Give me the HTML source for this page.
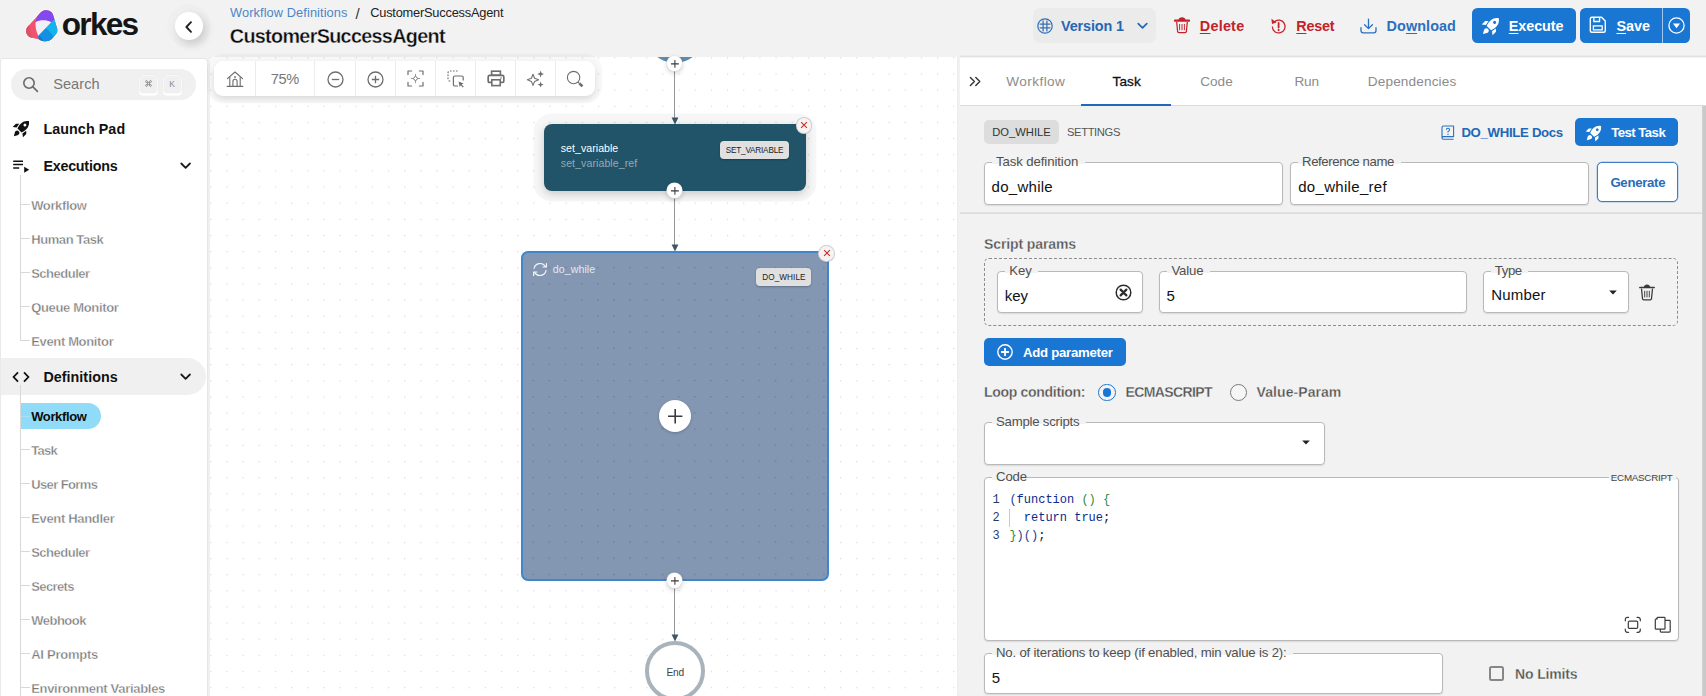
<!DOCTYPE html>
<html><head><meta charset="utf-8"><title>Orkes</title>
<style>
*{box-sizing:border-box;margin:0;padding:0}
html,body{width:1706px;height:696px;overflow:hidden;background:#f2f2f2;font-family:"Liberation Sans",sans-serif;}
body{position:relative}
.t{position:absolute;white-space:pre;line-height:1;display:block}
.a{position:absolute}
svg{position:absolute;overflow:visible}
u{text-decoration:underline;text-underline-offset:2.3px;text-decoration-thickness:1.35px}

</style></head>
<body>
<div class="a" style="left:959.5px;top:54.6px;width:746.5px;height:2.6px;background:linear-gradient(#f2f2f2,#e6e6e6 45%,#dedede)"></div><svg style="left:26px;top:10px;" width="32" height="32" viewBox="0 0 32 32">
<defs><clipPath id="lg"><path d="M14.6 2.4 C16.6 0.4 18.6 0 20.6 0.2 C24.6 0.4 27.2 3 27.9 7.4 L31.2 18.4 C31.9 21 31.1 23 29.5 24.8 L26.6 28.3 C24.6 30.5 22 31.5 19.3 31.3 C17 31.2 15 30.4 13.4 29.4 L4.6 27.4 C1.8 26.6 0 24 0 20.8 C0 19.5 0.4 18.3 1.1 17.3 Z"/></clipPath></defs>
<path d="M14.6 2.4 C16.6 0.4 18.6 0 20.6 0.2 C24.6 0.4 27.2 3 27.9 7.4 L31.2 18.4 C31.9 21 31.1 23 29.5 24.8 L26.6 28.3 C24.6 30.5 22 31.5 19.3 31.3 C17 31.2 15 30.4 13.4 29.4 L4.6 27.4 C1.8 26.6 0 24 0 20.8 C0 19.5 0.4 18.3 1.1 17.3 Z" fill="none" stroke="#fff" stroke-opacity=".75" stroke-width="1.6"/>
<g clip-path="url(#lg)">
<rect x="-1" y="-1" width="34" height="34" fill="#f1536f"/>
<path d="M-1 16 L3 14 L6 28.5 L-1 30 Z" fill="#dc5068"/>
<path d="M11.6 5 L9.6 12.2 L25.2 12.4 L29.6 8.8 L30 -1 L11 -1 Z" fill="#8448f0"/>
<path d="M25 12 L29.6 8.6 L33 9 L33 33 L14 33 L13.4 29.4 L12.2 25.4 Z" fill="#12b4ef"/>
<path d="M19 18.2 L21.8 19.4 L27.4 26 L24 33 L14 33 L13.4 29.4 L12.2 25.4 Z" fill="#1390e2"/>
<path d="M12.2 25.4 L15.4 27.4 L17.6 32 L13 31 Z" fill="#1b74d4"/>
<path d="M9.7 12 C14 9.7 21 9.9 25.2 12.2 L12.3 25.7 C10 21.5 9.1 16 9.7 12 Z" fill="#f3eff8"/>
</g>
</svg><span class="t" style="left:61.80px;top:9.15px;font-size:31.6px;color:#151515;font-weight:700;letter-spacing:-1.743px;">orkes</span><div class="a" style="left:174.5px;top:12.4px;width:28px;height:28px;border-radius:50%;background:#fff;box-shadow:3px 4px 10px rgba(0,0,0,.16),0 0 0 8px rgba(0,0,0,.012)"></div><svg style="left:182.5px;top:19.8px;" width="12" height="14" viewBox="0 0 12 14"><path d="M8 2.2 L3.4 7 L8 11.8" fill="none" stroke="#222" stroke-width="1.9" stroke-linecap="round" stroke-linejoin="round"/></svg><span class="t" style="left:230.00px;top:7.16px;font-size:12.8px;color:#4a87c7;font-weight:400;letter-spacing:0.091px;">Workflow Definitions</span><span class="t" style="left:355.40px;top:5.50px;font-size:15px;color:#333;font-weight:400;">/</span><span class="t" style="left:370.20px;top:7.16px;font-size:12.8px;color:#222;font-weight:400;letter-spacing:-0.204px;">CustomerSuccessAgent</span><span class="t" style="left:229.80px;top:26.64px;font-size:19.8px;color:#0b0b0b;font-weight:700;letter-spacing:-0.683px;-webkit-text-stroke:.35px #f2f2f2;">CustomerSuccessAgent</span><div class="a" style="left:1033px;top:8px;width:122.5px;height:35px;background:#ebebeb;border-radius:7px"></div><svg style="left:1037px;top:17.7px;" width="16" height="16" viewBox="0 0 16 16"><circle cx="8" cy="8" r="7.2" fill="none" stroke="#2a70bf" stroke-width="1.2"/><path d="M6.1 2.6V13.4M9.9 2.6V13.4M2.6 6.1H13.4M2.6 9.9H13.4" stroke="#3a6fae" stroke-width="1.25" fill="none"/></svg><span class="t" style="left:1061.00px;top:18.61px;font-size:14.4px;color:#2368b4;font-weight:700;letter-spacing:-0.111px;">Version 1</span><svg style="left:1136.5px;top:22px;" width="11" height="8" viewBox="0 0 11 8"><path d="M1.2 1.6 L5.5 5.9 L9.8 1.6" fill="none" stroke="#2368b4" stroke-width="1.7" stroke-linecap="round" stroke-linejoin="round"/></svg><svg style="left:1173.6px;top:15.6px;" width="16" height="18" viewBox="0 0 16 18"><path d="M2.7 6 L3.6 15.4 Q3.7 16.6 4.9 16.6 H11.1 Q12.3 16.6 12.4 15.4 L13.3 6" fill="none" stroke="#c4212b" stroke-width="1.25"/><path d="M1 4.7 H15" stroke="#c4212b" stroke-width="2.3" stroke-linecap="round"/><path d="M4.4 4.4 C4.4 0.2 11.6 0.2 11.6 4.4 Z" fill="#c4212b"/><path d="M5.6 8V14.2M8 8V14.2M10.4 8V14.2" stroke="#c4212b" stroke-width=".95"/></svg><span class="t" style="left:1199.80px;top:18.61px;font-size:14.4px;color:#c4212b;font-weight:700;letter-spacing:0.230px;"><u>D</u>elete</span><svg style="left:1270.1px;top:17.8px;" width="17" height="17" viewBox="0 0 17 17"><path d="M4.2 4 A6.4 6.4 0 1 1 2.3 8.6" fill="none" stroke="#c4212b" stroke-width="1.25"/><path d="M1.4 0.8 L2 6 L6.6 4.6 Z" fill="#c4212b"/><path d="M8.6 5V9.6" stroke="#c4212b" stroke-width="1.8" stroke-linecap="round"/><circle cx="8.6" cy="12.1" r="1.05" fill="#c4212b"/></svg><span class="t" style="left:1296.30px;top:18.61px;font-size:14.4px;color:#c4212b;font-weight:700;letter-spacing:-0.244px;"><u>R</u>eset</span><svg style="left:1360px;top:17.5px;" width="17" height="16" viewBox="0 0 17 16"><path d="M8.5 1.2 V10.4 M4.6 6.8 L8.5 10.6 L12.4 6.8" fill="none" stroke="#2a70bf" stroke-width="1.3" stroke-linecap="round" stroke-linejoin="round"/><path d="M1 9.6 V12.6 Q1 14.8 3.2 14.8 H13.8 Q16 14.8 16 12.6 V9.6" fill="none" stroke="#2a70bf" stroke-width="1.3" stroke-linecap="round"/></svg><span class="t" style="left:1386.50px;top:18.61px;font-size:14.4px;color:#2a70bf;font-weight:700;letter-spacing:0.092px;">Do<u>w</u>nload</span><div class="a" style="left:1472px;top:7.6px;width:104px;height:35.8px;background:#1976d2;border-radius:5.5px"></div><svg style="left:1480.9px;top:15.7px;" width="20" height="20" viewBox="0 0 18 18"><g transform="translate(9 9) rotate(45) scale(.885) translate(-10 -11.4)"><path d="M10 0.2 C14.7 3.4 15.2 9.2 13.1 14.4 L6.9 14.4 C4.8 9.2 5.3 3.4 10 0.2 Z" fill="#fff"/><circle cx="10" cy="6.2" r="1.55" fill="#1976d2"/><path d="M4.7 9.6 L2.2 12 L2.2 17 L5.6 14.4 Z M15.3 9.6 L17.8 12 L17.8 17 L14.4 14.4 Z" fill="#fff"/><path d="M10 15.6 C12.2 15.6 12.9 17.6 12.1 19.4 L10 23 L7.9 19.4 C7.1 17.6 7.8 15.6 10 15.6 Z" fill="#fff"/></g></svg><span class="t" style="left:1508.80px;top:18.61px;font-size:14.4px;color:#fff;font-weight:700;letter-spacing:-0.088px;"><u>E</u>xecute</span><div class="a" style="left:1580px;top:7.6px;width:110px;height:35.8px;background:#1976d2;border-radius:5.5px"></div><div class="a" style="left:1662px;top:7.6px;width:1px;height:35.8px;background:rgba(255,255,255,.6)"></div><svg style="left:1589.2px;top:16.4px;" width="17.6" height="17.6" viewBox="0 0 16 16"><path d="M1.2 2.6 Q1.2 1.2 2.6 1.2 H11.4 L14.8 4.6 V13.4 Q14.8 14.8 13.4 14.8 H2.6 Q1.2 14.8 1.2 13.4 Z" fill="none" stroke="#fff" stroke-width="1.3" stroke-linejoin="round"/><path d="M4.4 1.4 V5 H9.6 V1.4" fill="none" stroke="#fff" stroke-width="1.2"/><rect x="4" y="9" width="8" height="3.6" fill="none" stroke="#fff" stroke-width="1.2"/></svg><span class="t" style="left:1616.50px;top:18.61px;font-size:14.4px;color:#fff;font-weight:700;letter-spacing:-0.056px;"><u>S</u>ave</span><svg style="left:1667.7px;top:17.2px;" width="17" height="17" viewBox="0 0 17 17"><circle cx="8.5" cy="8.5" r="7.6" fill="none" stroke="#fff" stroke-width="1.3"/><path d="M4.9 6.6 H12.1 L8.5 11.2 Z" fill="#fff"/></svg><div class="a" style="left:0px;top:57.6px;width:207.5px;height:640px;background:#fff;border:1.5px solid #e6e6e6;border-left:1px solid #e9e9e9;border-bottom:0;border-top-right-radius:4px;border-top-left-radius:3px;border-top-width:1.2px"></div><div class="a" style="left:11px;top:69px;width:185px;height:31px;background:#f0f0f0;border-radius:16px"></div><svg style="left:22px;top:75.5px;" width="18" height="18" viewBox="0 0 18 18"><circle cx="7" cy="7" r="5.2" fill="none" stroke="#6b6b6b" stroke-width="1.6"/><path d="M10.9 10.9 L15.4 15.4" stroke="#6b6b6b" stroke-width="1.7" stroke-linecap="round"/></svg><span class="t" style="left:53.20px;top:77.24px;font-size:14.6px;color:#777;font-weight:400;letter-spacing:0.042px;">Search</span><div class="a" style="left:138.5px;top:74.6px;width:19px;height:19px;background:#f0f0f0;border-radius:4px;border:1px solid #f8f8f8;box-shadow:0 1.6px 0 #fff,0 0 0 .5px #e9e9e9"></div><div class="a" style="left:162.5px;top:74.6px;width:19px;height:19px;background:#f0f0f0;border-radius:4px;border:1px solid #f8f8f8;box-shadow:0 1.6px 0 #fff,0 0 0 .5px #e9e9e9"></div><svg style="left:144.5px;top:80.2px;" width="7" height="7" viewBox="0 0 7 7"><path d="M2.4 2.4 H4.6 V4.6 H2.4 Z M2.4 2.4 H1.4 A.9 .9 0 1 1 2.4 1.4 Z M4.6 2.4 V1.4 A.9 .9 0 1 1 5.6 2.4 Z M4.6 4.6 H5.6 A.9 .9 0 1 1 4.6 5.6 Z M2.4 4.6 V5.6 A.9 .9 0 1 1 1.4 4.6 Z" fill="none" stroke="#888" stroke-width=".9"/></svg><span class="t" style="left:169.20px;top:80.12px;font-size:8.6px;color:#888;font-weight:400;">K</span><svg style="left:12px;top:118.6px;" width="19" height="19" viewBox="0 0 18 18"><g transform="translate(9 9) rotate(45) scale(.885) translate(-10 -11.4)"><path d="M10 0.2 C14.7 3.4 15.2 9.2 13.1 14.4 L6.9 14.4 C4.8 9.2 5.3 3.4 10 0.2 Z" fill="#111"/><circle cx="10" cy="6.2" r="1.55" fill="#fff"/><path d="M4.7 9.6 L2.2 12 L2.2 17 L5.6 14.4 Z M15.3 9.6 L17.8 12 L17.8 17 L14.4 14.4 Z" fill="#111"/><path d="M10 15.6 C12.2 15.6 12.9 17.6 12.1 19.4 L10 23 L7.9 19.4 C7.1 17.6 7.8 15.6 10 15.6 Z" fill="#111"/></g></svg><span class="t" style="left:43.40px;top:121.90px;font-size:14.3px;color:#111;font-weight:700;letter-spacing:0.077px;">Launch Pad</span><svg style="left:12px;top:159px;" width="19" height="15" viewBox="0 0 19 15"><path d="M1.2 2.3 H11 M1.2 5.6 H11 M1.2 8.9 H7.2" stroke="#111" stroke-width="1.5" fill="none"/><path d="M12.2 7.8 L17.2 10.7 L12.2 13.7 Z" fill="#111"/></svg><span class="t" style="left:43.40px;top:158.90px;font-size:14.3px;color:#111;font-weight:700;letter-spacing:-0.228px;">Executions</span><svg style="left:180.4px;top:162px;" width="11" height="8" viewBox="0 0 11 8"><path d="M1.3 1.5 L5.6 5.8 L9.9 1.5" fill="none" stroke="#1a1a1a" stroke-width="1.8" stroke-linecap="round" stroke-linejoin="round"/></svg><div class="a" style="left:20px;top:174.5px;width:1px;height:166.5px;background:#d8d8d8"></div><div class="a" style="left:20px;top:204.2px;width:9.8px;height:1px;background:#d8d8d8"></div><span class="t" style="left:31.20px;top:198.60px;font-size:13px;color:#7a7a7a;font-weight:700;letter-spacing:-0.371px;-webkit-text-stroke:.35px #fff;">Workflow</span><div class="a" style="left:20px;top:238.2px;width:9.8px;height:1px;background:#d8d8d8"></div><span class="t" style="left:31.20px;top:232.60px;font-size:13px;color:#7a7a7a;font-weight:700;letter-spacing:-0.414px;-webkit-text-stroke:.35px #fff;">Human Task</span><div class="a" style="left:20px;top:272.2px;width:9.8px;height:1px;background:#d8d8d8"></div><span class="t" style="left:31.20px;top:266.60px;font-size:13px;color:#7a7a7a;font-weight:700;letter-spacing:-0.495px;-webkit-text-stroke:.35px #fff;">Scheduler</span><div class="a" style="left:20px;top:306.2px;width:9.8px;height:1px;background:#d8d8d8"></div><span class="t" style="left:31.20px;top:300.60px;font-size:13px;color:#7a7a7a;font-weight:700;letter-spacing:-0.340px;-webkit-text-stroke:.35px #fff;">Queue Monitor</span><div class="a" style="left:20px;top:340.2px;width:9.8px;height:1px;background:#d8d8d8"></div><span class="t" style="left:31.20px;top:334.60px;font-size:13px;color:#7a7a7a;font-weight:700;letter-spacing:-0.344px;-webkit-text-stroke:.35px #fff;">Event Monitor</span><div class="a" style="left:1px;top:357.8px;width:204.5px;height:37px;background:#f0f0f0;border-radius:0 18.5px 18.5px 0"></div><svg style="left:12.2px;top:370.5px;" width="18" height="12" viewBox="0 0 18 12"><path d="M6 1.4 L1.6 6 L6 10.6 M12 1.4 L16.4 6 L12 10.6" fill="none" stroke="#111" stroke-width="1.8" stroke-linejoin="miter"/></svg><span class="t" style="left:43.40px;top:369.90px;font-size:14.3px;color:#111;font-weight:700;letter-spacing:0.039px;">Definitions</span><svg style="left:180.4px;top:373px;" width="11" height="8" viewBox="0 0 11 8"><path d="M1.3 1.5 L5.6 5.8 L9.9 1.5" fill="none" stroke="#1a1a1a" stroke-width="1.8" stroke-linecap="round" stroke-linejoin="round"/></svg><div class="a" style="left:20px;top:385px;width:1px;height:320px;background:#d8d8d8"></div><div class="a" style="left:20.5px;top:403px;width:80px;height:25.6px;background:#90dcf8;border-radius:0 13px 13px 0"></div><div class="a" style="left:21px;top:416px;width:8.5px;height:1px;background:#a9e0f5"></div><span class="t" style="left:31.20px;top:409.60px;font-size:13px;color:#0c0c0c;font-weight:700;letter-spacing:-0.371px;">Workflow</span><div class="a" style="left:20px;top:449.2px;width:9.8px;height:1px;background:#d8d8d8"></div><span class="t" style="left:31.20px;top:443.60px;font-size:13px;color:#7a7a7a;font-weight:700;letter-spacing:-0.718px;-webkit-text-stroke:.35px #fff;">Task</span><div class="a" style="left:20px;top:483.2px;width:9.8px;height:1px;background:#d8d8d8"></div><span class="t" style="left:31.20px;top:477.60px;font-size:13px;color:#7a7a7a;font-weight:700;letter-spacing:-0.605px;-webkit-text-stroke:.35px #fff;">User Forms</span><div class="a" style="left:20px;top:517.2px;width:9.8px;height:1px;background:#d8d8d8"></div><span class="t" style="left:31.20px;top:511.60px;font-size:13px;color:#7a7a7a;font-weight:700;letter-spacing:-0.325px;-webkit-text-stroke:.35px #fff;">Event Handler</span><div class="a" style="left:20px;top:551.2px;width:9.8px;height:1px;background:#d8d8d8"></div><span class="t" style="left:31.20px;top:545.60px;font-size:13px;color:#7a7a7a;font-weight:700;letter-spacing:-0.495px;-webkit-text-stroke:.35px #fff;">Scheduler</span><div class="a" style="left:20px;top:585.2px;width:9.8px;height:1px;background:#d8d8d8"></div><span class="t" style="left:31.20px;top:579.60px;font-size:13px;color:#7a7a7a;font-weight:700;letter-spacing:-0.598px;-webkit-text-stroke:.35px #fff;">Secrets</span><div class="a" style="left:20px;top:619.2px;width:9.8px;height:1px;background:#d8d8d8"></div><span class="t" style="left:31.20px;top:613.60px;font-size:13px;color:#7a7a7a;font-weight:700;letter-spacing:-0.495px;-webkit-text-stroke:.35px #fff;">Webhook</span><div class="a" style="left:20px;top:653.2px;width:9.8px;height:1px;background:#d8d8d8"></div><span class="t" style="left:31.20px;top:647.60px;font-size:13px;color:#7a7a7a;font-weight:700;letter-spacing:-0.254px;-webkit-text-stroke:.35px #fff;">AI Prompts</span><div class="a" style="left:20px;top:687.2px;width:9.8px;height:1px;background:#d8d8d8"></div><span class="t" style="left:31.20px;top:681.60px;font-size:13px;color:#7a7a7a;font-weight:700;letter-spacing:-0.303px;-webkit-text-stroke:.35px #fff;">Environment Variables</span><div class="a" style="left:209.6px;top:56.8px;width:747.6px;height:639.2px;background:#fff;overflow:hidden"><svg style="left:0;top:0" width="747.6" height="639.2"><defs><pattern id="dots" x="0.25" y="0.25" width="16.15" height="16.15" patternUnits="userSpaceOnUse"><rect x="0" y="0" width="1.2" height="1.2" fill="#d8d8d8"/></pattern></defs><rect width="100%" height="100%" fill="url(#dots)"/></svg></div><div class="a" style="left:207.5px;top:57.2px;width:2.1px;height:640px;background:#f0f0f0"></div><div class="a" style="left:957.2px;top:57.2px;width:2.8px;height:640px;background:linear-gradient(90deg,#ececec,#f3f3f3)"></div><div class="a" style="left:640px;top:56.8px;width:70px;height:9px;overflow:hidden"><div class="a" style="left:5.5px;top:-52.099999999999994px;width:58px;height:58px;border-radius:50%;background:#5f89ad"></div></div><div class="a" style="left:673.8px;top:63px;width:1.4px;height:56px;background:#979797"></div><svg style="left:670.5px;top:116.5px;" width="8" height="8" viewBox="0 0 8 8"><path d="M0.6 0.4 H7.4 L4 7.6 Z" fill="#3f566a"/></svg><div class="a" style="left:673.8px;top:191px;width:1.4px;height:55.5px;background:#979797"></div><svg style="left:670.5px;top:244.0px;" width="8" height="8" viewBox="0 0 8 8"><path d="M0.6 0.4 H7.4 L4 7.6 Z" fill="#3f566a"/></svg><div class="a" style="left:673.8px;top:581px;width:1.4px;height:55.5px;background:#979797"></div><svg style="left:670.5px;top:634.0px;" width="8" height="8" viewBox="0 0 8 8"><path d="M0.6 0.4 H7.4 L4 7.6 Z" fill="#3f566a"/></svg><div class="a" style="left:543.8px;top:123.8px;width:262.4px;height:67px;background:#215468;border-radius:8px;box-shadow:0 0 0 10.5px rgba(0,0,0,.035),0 3px 8px rgba(0,0,0,.18)"></div><span class="t" style="left:560.80px;top:142.63px;font-size:10.6px;color:#fff;font-weight:400;letter-spacing:0.031px;">set_variable</span><span class="t" style="left:560.80px;top:158.23px;font-size:10.6px;color:#94aab5;font-weight:400;letter-spacing:0.069px;">set_variable_ref</span><div class="a" style="left:719.6px;top:140.8px;width:69.4px;height:17.8px;background:#e0e0e0;border-radius:4px;box-shadow:0 1px 2px rgba(0,0,0,.25)"></div><span class="t" style="left:725.70px;top:146.56px;font-size:8.2px;color:#222;font-weight:400;letter-spacing:-0.193px;">SET_VARIABLE</span><div class="a" style="left:666.85px;top:55.85px;width:15.5px;height:15.5px;background:#fff;border-radius:50%;box-shadow:0 0 0 .6px #e2e2e2,0 2px 5px rgba(0,0,0,.22)"></div><svg style="left:669.7px;top:58.7px;" width="9.8" height="9.8" viewBox="0 0 9.8 9.8"><path d="M4.9 1 V8.8 M1 4.9 H8.8" stroke="#3a3a3a" stroke-width="1.05" fill="none"/></svg><div class="a" style="left:666.75px;top:182.95px;width:15.5px;height:15.5px;background:#fff;border-radius:50%;box-shadow:0 0 0 .6px #e2e2e2,0 2px 5px rgba(0,0,0,.22)"></div><svg style="left:669.6px;top:185.79999999999998px;" width="9.8" height="9.8" viewBox="0 0 9.8 9.8"><path d="M4.9 1 V8.8 M1 4.9 H8.8" stroke="#3a3a3a" stroke-width="1.05" fill="none"/></svg><div class="a" style="left:796.7px;top:118.10000000000001px;width:14.6px;height:14.6px;background:#f7f3f3;border-radius:50%;box-shadow:0 0 0 1px #cfcfcf,0 1px 2px rgba(0,0,0,.2)"></div><svg style="left:800px;top:121.4px;" width="8" height="8" viewBox="0 0 8 8"><path d="M1.1 1.1 L6.9 6.9 M6.9 1.1 L1.1 6.9" stroke="#cc2b2b" stroke-width="1.1" fill="none"/></svg><div class="a" style="left:521.4px;top:251.2px;width:307.2px;height:329.8px;background:rgba(96,121,156,.78);border:2px solid #3f86cc;border-radius:7px"></div><svg style="left:523.4px;top:253.2px" width="303.2" height="325.3"><defs><pattern id="dots2" x="-313.55" y="-196.15" width="16.15" height="16.15" patternUnits="userSpaceOnUse"><rect x="0" y="0" width="1.2" height="1.2" fill="rgba(60,80,110,.38)"/></pattern></defs><rect width="100%" height="100%" fill="url(#dots2)"/></svg><svg style="left:531.8px;top:262.3px;" width="16" height="15" viewBox="0 0 16 15"><path d="M2 6.4 A6.2 6.2 0 0 1 13.4 4.6 M14 8.6 A6.2 6.2 0 0 1 2.6 10.4" fill="none" stroke="#f2f5f8" stroke-width="1.2" stroke-linecap="round"/><path d="M14.4 1.6 V5 H11 M1.6 13.4 V10 H5" fill="none" stroke="#f2f5f8" stroke-width="1.2" stroke-linecap="round" stroke-linejoin="round"/></svg><span class="t" style="left:552.80px;top:264.23px;font-size:10.6px;color:#e4e9ef;font-weight:400;letter-spacing:0.084px;">do_while</span><div class="a" style="left:756.2px;top:268.4px;width:55.2px;height:17.6px;background:#e0e0e0;border-radius:4px;box-shadow:0 1px 2px rgba(0,0,0,.25)"></div><span class="t" style="left:762.20px;top:274.36px;font-size:8.2px;color:#222;font-weight:400;letter-spacing:0.079px;">DO_WHILE</span><div class="a" style="left:819.2px;top:246.0px;width:14.6px;height:14.6px;background:#f7f3f3;border-radius:50%;box-shadow:0 0 0 1px #cfcfcf,0 1px 2px rgba(0,0,0,.2)"></div><svg style="left:822.5px;top:249.3px;" width="8" height="8" viewBox="0 0 8 8"><path d="M1.1 1.1 L6.9 6.9 M6.9 1.1 L1.1 6.9" stroke="#cc2b2b" stroke-width="1.1" fill="none"/></svg><div class="a" style="left:658.8px;top:400.2px;width:32px;height:32px;background:#fff;border-radius:50%;box-shadow:0 1px 3px rgba(0,0,0,.2)"></div><svg style="left:666.5999999999999px;top:408.0px;" width="16.4" height="16.4" viewBox="0 0 16.4 16.4"><path d="M8.2 1 V15.4 M1 8.2 H15.4" stroke="#3a3a3a" stroke-width="1.6" fill="none"/></svg><div class="a" style="left:666.75px;top:572.95px;width:15.5px;height:15.5px;background:#fff;border-radius:50%;box-shadow:0 0 0 .6px #e2e2e2,0 2px 5px rgba(0,0,0,.22)"></div><svg style="left:669.6px;top:575.8000000000001px;" width="9.8" height="9.8" viewBox="0 0 9.8 9.8"><path d="M4.9 1 V8.8 M1 4.9 H8.8" stroke="#3a3a3a" stroke-width="1.05" fill="none"/></svg><div class="a" style="left:645px;top:641px;width:59.5px;height:59.5px;background:#fff;border-radius:50%;border:4px solid #a9b3bb"></div><span class="t" style="left:666.40px;top:667.57px;font-size:10.2px;color:#444;font-weight:400;letter-spacing:-0.180px;">End</span><div class="a" style="left:214.4px;top:61.4px;width:381px;height:34.4px;background:#fff;border-radius:9px;box-shadow:0 0 0 7px rgba(0,0,0,.028),0 3px 6px rgba(0,0,0,.12)"></div><div class="a" style="left:254.9px;top:61.4px;width:1px;height:34.4px;background:#ececec"></div><div class="a" style="left:314.0px;top:61.4px;width:1px;height:34.4px;background:#ececec"></div><div class="a" style="left:355.0px;top:61.4px;width:1px;height:34.4px;background:#ececec"></div><div class="a" style="left:395.1px;top:61.4px;width:1px;height:34.4px;background:#ececec"></div><div class="a" style="left:435.2px;top:61.4px;width:1px;height:34.4px;background:#ececec"></div><div class="a" style="left:475.3px;top:61.4px;width:1px;height:34.4px;background:#ececec"></div><div class="a" style="left:515.2px;top:61.4px;width:1px;height:34.4px;background:#ececec"></div><div class="a" style="left:555.0px;top:61.4px;width:1px;height:34.4px;background:#ececec"></div><svg style="left:225.8px;top:70.0px;" width="18" height="18" viewBox="0 0 18 18"><path d="M1.4 8.6 L9 2 L16.6 8.6" fill="none" stroke="#6e6e6e" stroke-width="1.1" stroke-linejoin="round" stroke-linecap="round"/><path d="M3.8 7.2 V16.2 M14.2 7.2 V16.2 M1.2 16.4 H16.8" fill="none" stroke="#6e6e6e" stroke-width="1.1" stroke-linecap="round"/><path d="M6.9 16.2 V11.4 A2.1 2.1 0 0 1 11.1 11.4 V16.2" fill="none" stroke="#6e6e6e" stroke-width="1.1"/><circle cx="9" cy="7" r=".9" fill="#6e6e6e"/></svg><span class="t" style="left:270.80px;top:71.74px;font-size:14.6px;color:#777;font-weight:400;letter-spacing:-0.406px;">75%</span><svg style="left:326.7px;top:70.6px;" width="17" height="17" viewBox="0 0 17 17"><circle cx="8.5" cy="8.5" r="7.5" fill="none" stroke="#6e6e6e" stroke-width="1.3"/><path d="M4.8 8.5 H12.2" stroke="#6e6e6e" stroke-width="1.3"/></svg><svg style="left:366.9px;top:70.6px;" width="17" height="17" viewBox="0 0 17 17"><circle cx="8.5" cy="8.5" r="7.5" fill="none" stroke="#6e6e6e" stroke-width="1.3"/><path d="M4.8 8.5 H12.2 M8.5 4.8 V12.2" stroke="#6e6e6e" stroke-width="1.3"/></svg><svg style="left:407px;top:70.3px;" width="17" height="17" viewBox="0 0 17 17"><path d="M1 4.6 V1 H4.6 M12.4 1 H16 V4.6 M16 12.4 V16 H12.4 M4.6 16 H1 V12.4" fill="none" stroke="#6e6e6e" stroke-width="1.2" stroke-linecap="round" stroke-linejoin="round"/><path d="M8.5 5.8 L9.5 7.5 L11.2 8.5 L9.5 9.5 L8.5 11.2 L7.5 9.5 L5.8 8.5 L7.5 7.5 Z" fill="none" stroke="#6e6e6e" stroke-width=".9" stroke-linejoin="round"/><path d="M8.5 3.8 V5.8 M8.5 11.2 V13.2 M3.8 8.5 H5.8 M11.2 8.5 H13.2" stroke="#6e6e6e" stroke-width=".9" opacity=".75"/></svg><svg style="left:446.6px;top:70.0px;" width="18" height="18" viewBox="0 0 18 18"><path d="M10.6 1 H3 Q1 1 1 3 V9 Q1 11 3 11 H4.6" fill="none" stroke="#6e6e6e" stroke-width="1.1" stroke-dasharray="1.6 1.4"/><path d="M6.4 7.6 Q6.4 6 8 6 H14.6 Q16.2 6 16.2 7.6 V10.4 M6.4 7.6 V14.4 Q6.4 16 8 16 H11" fill="none" stroke="#6e6e6e" stroke-width="1.2"/><path d="M11.6 11.4 L16.6 13.4 L14.6 14.4 L16.8 16.8 L15.8 17.6 L13.8 15.2 L12.6 17 Z" fill="#6e6e6e"/></svg><svg style="left:486.6px;top:70.1px;" width="18" height="17" viewBox="0 0 18 17"><rect x="4.6" y="1.2" width="8.8" height="4" fill="none" stroke="#6e6e6e" stroke-width="1.6"/><path d="M4.4 12.4 H2.4 Q1.2 12.4 1.2 11.2 V6.8 Q1.2 5.4 2.6 5.4 H15.4 Q16.8 5.4 16.8 6.8 V11.2 Q16.8 12.4 15.6 12.4 H13.6" fill="none" stroke="#6e6e6e" stroke-width="1.7"/><rect x="4.8" y="9.8" width="8.4" height="5.8" fill="#fff" stroke="#6e6e6e" stroke-width="1.6"/><circle cx="14" cy="8" r=".8" fill="#6e6e6e"/></svg><svg style="left:526.2px;top:69.5px;" width="19" height="19" viewBox="0 0 19 19"><path d="M7 4.2 L8.6 8.2 L12.6 9.8 L8.6 11.4 L7 15.4 L5.4 11.4 L1.4 9.8 L5.4 8.2 Z" fill="none" stroke="#6e6e6e" stroke-width="1.1" stroke-linejoin="round"/><path d="M14.6 0.6 L15.5 3.1 L18 4 L15.5 4.9 L14.6 7.4 L13.7 4.9 L11.2 4 L13.7 3.1 Z M14.6 11.6 L15.4 13.8 L17.6 14.6 L15.4 15.4 L14.6 17.6 L13.8 15.4 L11.6 14.6 L13.8 13.8 Z" fill="#6e6e6e"/></svg><svg style="left:566.2px;top:69.5px;" width="19" height="19" viewBox="0 0 19 19"><circle cx="7.6" cy="7.6" r="6.2" fill="none" stroke="#6e6e6e" stroke-width="1.1"/><path d="M12 12 L13.4 13.4" stroke="#6e6e6e" stroke-width="1.2"/><path d="M13.4 13.4 L16.4 16.4" stroke="#6e6e6e" stroke-width="2.7" stroke-linecap="butt"/></svg><div class="a" style="left:960px;top:57.5px;width:746px;height:47.5px;background:#fff"></div><div class="a" style="left:960px;top:104.6px;width:746px;height:1.6px;background:#dcdcdc"></div><svg style="left:968.5px;top:76px;" width="13" height="11" viewBox="0 0 13 11"><path d="M1.4 1.4 L5.4 5.5 L1.4 9.6 M6.8 1.4 L10.8 5.5 L6.8 9.6" fill="none" stroke="#333" stroke-width="1.4" stroke-linecap="round" stroke-linejoin="round"/></svg><span class="t" style="left:1006.30px;top:74.69px;font-size:13.6px;color:#8c8c8c;font-weight:400;letter-spacing:0.418px;">Workflow</span><span class="t" style="left:1112.60px;top:74.69px;font-size:13.6px;color:#111;font-weight:400;letter-spacing:0.062px;-webkit-text-stroke:.3px #111;">Task</span><span class="t" style="left:1200.20px;top:74.69px;font-size:13.6px;color:#8c8c8c;font-weight:400;letter-spacing:0.025px;">Code</span><span class="t" style="left:1294.40px;top:74.69px;font-size:13.6px;color:#8c8c8c;font-weight:400;letter-spacing:-0.179px;">Run</span><span class="t" style="left:1367.80px;top:74.69px;font-size:13.6px;color:#8c8c8c;font-weight:400;letter-spacing:0.140px;">Dependencies</span><div class="a" style="left:1081.3px;top:103.8px;width:89.7px;height:2.4px;background:#2368b8"></div><div class="a" style="left:1702.3px;top:105.5px;width:3.7px;height:590.5px;background:linear-gradient(90deg,#d2d2d2,#c9c9c9 40%)"></div><div class="a" style="left:960px;top:212px;width:742.4000000000001px;height:2px;background:linear-gradient(#e4e4e4,#d9d9d9)"></div><div class="a" style="left:984px;top:120.4px;width:75px;height:24px;background:#dddddd;border-radius:5px"></div><span class="t" style="left:992.20px;top:127.12px;font-size:11.2px;color:#333;font-weight:400;letter-spacing:0.020px;">DO_WHILE</span><span class="t" style="left:1067.00px;top:127.12px;font-size:11.2px;color:#555;font-weight:400;letter-spacing:-0.369px;">SETTINGS</span><svg style="left:1440.5px;top:124.5px;" width="14" height="15" viewBox="0 0 14 15"><path d="M2.4 1 H12.6 V11.6 H2.4 Q1 11.6 1 13 Q1 14.2 2.4 14.2 H12.6 M1 13 V2.4 Q1 1 2.4 1" fill="none" stroke="#2a70bf" stroke-width="1.1" stroke-linejoin="round"/><path d="M5.4 4.8 Q5.4 3.2 7 3.2 Q8.6 3.2 8.6 4.8 Q8.6 5.8 7 6.6 V7.6" fill="none" stroke="#2a70bf" stroke-width="1.1"/><circle cx="7" cy="9.4" r=".7" fill="#2a70bf"/></svg><span class="t" style="left:1461.40px;top:126.23px;font-size:13.2px;color:#2268b6;font-weight:700;letter-spacing:-0.309px;">DO_WHILE Docs</span><div class="a" style="left:1575.2px;top:118.3px;width:103.1px;height:27.9px;background:#1976d2;border-radius:5px"></div><svg style="left:1584.6px;top:123.6px;" width="18" height="18" viewBox="0 0 18 18"><g transform="translate(9 9) rotate(45) scale(.885) translate(-10 -11.4)"><path d="M10 0.2 C14.7 3.4 15.2 9.2 13.1 14.4 L6.9 14.4 C4.8 9.2 5.3 3.4 10 0.2 Z" fill="#fff"/><circle cx="10" cy="6.2" r="1.55" fill="#1976d2"/><path d="M4.7 9.6 L2.2 12 L2.2 17 L5.6 14.4 Z M15.3 9.6 L17.8 12 L17.8 17 L14.4 14.4 Z" fill="#fff"/><path d="M10 15.6 C12.2 15.6 12.9 17.6 12.1 19.4 L10 23 L7.9 19.4 C7.1 17.6 7.8 15.6 10 15.6 Z" fill="#fff"/></g></svg><span class="t" style="left:1611.20px;top:126.23px;font-size:13.2px;color:#fff;font-weight:700;letter-spacing:-0.543px;">Test Task</span><div class="a" style="left:984px;top:162px;width:298.7px;height:42.8px;background:#fff;border:1px solid #b9b9b9;border-radius:4px;box-shadow:0 1px 1.5px rgba(0,0,0,.10)"></div><div class="a" style="left:992px;top:161px;width:92.7px;height:3px;background:#f2f2f2"></div><span class="t" style="left:996.00px;top:155.03px;font-size:13.2px;color:#505050;font-weight:400;letter-spacing:-0.092px;">Task definition</span><span class="t" style="left:991.60px;top:178.90px;font-size:15px;color:#111;font-weight:400;letter-spacing:0.273px;">do_while</span><div class="a" style="left:1290px;top:162px;width:299.3px;height:42.8px;background:#fff;border:1px solid #b9b9b9;border-radius:4px;box-shadow:0 1px 1.5px rgba(0,0,0,.10)"></div><div class="a" style="left:1298px;top:161px;width:102.5px;height:3px;background:#f2f2f2"></div><span class="t" style="left:1302.00px;top:155.03px;font-size:13.2px;color:#505050;font-weight:400;letter-spacing:-0.393px;">Reference name</span><span class="t" style="left:1298.20px;top:178.90px;font-size:15px;color:#111;font-weight:400;letter-spacing:0.311px;">do_while_ref</span><div class="a" style="left:1597.3px;top:162.2px;width:81px;height:40.2px;background:#fff;border:1px solid #3b7cc4;border-radius:5px;box-shadow:0 0 0 .5px #9ec1e6"></div><span class="t" style="left:1610.40px;top:176.03px;font-size:13.2px;color:#2a6cb8;font-weight:700;letter-spacing:-0.298px;">Generate</span><span class="t" style="left:984.00px;top:236.75px;font-size:14px;color:#4f4f4f;font-weight:700;letter-spacing:-0.106px;-webkit-text-stroke:.3px #f2f2f2;">Script params</span><div class="a" style="left:984px;top:257.6px;width:694.3px;height:68.1px;border:1px dashed #8d8d8d;border-radius:5px"></div><div class="a" style="left:997.3px;top:270.5px;width:145.7px;height:42px;background:#fff;border:1px solid #b9b9b9;border-radius:4px;box-shadow:0 1px 1.5px rgba(0,0,0,.10)"></div><div class="a" style="left:1005.3px;top:269.5px;width:32.9px;height:3px;background:#f2f2f2"></div><span class="t" style="left:1009.30px;top:263.53px;font-size:13.2px;color:#505050;font-weight:400;letter-spacing:-0.111px;">Key</span><span class="t" style="left:1004.80px;top:287.90px;font-size:15px;color:#111;font-weight:400;letter-spacing:-0.115px;">key</span><svg style="left:1114.8px;top:283.8px;" width="17" height="17" viewBox="0 0 17 17"><circle cx="8.5" cy="8.5" r="7.3" fill="none" stroke="#2c2c2c" stroke-width="1.5"/><path d="M5.6 5.6 L11.4 11.4 M11.4 5.6 L5.6 11.4" stroke="#2c2c2c" stroke-width="2.2" stroke-linecap="round"/></svg><div class="a" style="left:1159.4px;top:270.5px;width:307.9px;height:42px;background:#fff;border:1px solid #b9b9b9;border-radius:4px;box-shadow:0 1px 1.5px rgba(0,0,0,.10)"></div><div class="a" style="left:1167.4px;top:269.5px;width:42.5px;height:3px;background:#f2f2f2"></div><span class="t" style="left:1171.40px;top:263.53px;font-size:13.2px;color:#505050;font-weight:400;letter-spacing:-0.150px;">Value</span><span class="t" style="left:1166.60px;top:287.90px;font-size:15px;color:#111;font-weight:400;">5</span><div class="a" style="left:1482.8px;top:270.5px;width:146.2px;height:42px;background:#fff;border:1px solid #b9b9b9;border-radius:4px;box-shadow:0 1px 1.5px rgba(0,0,0,.10)"></div><div class="a" style="left:1490.8px;top:269.5px;width:37.5px;height:3px;background:#f2f2f2"></div><span class="t" style="left:1494.80px;top:263.53px;font-size:13.2px;color:#505050;font-weight:400;letter-spacing:-0.398px;">Type</span><span class="t" style="left:1491.20px;top:287.30px;font-size:15px;color:#111;font-weight:400;letter-spacing:0.190px;">Number</span><svg style="left:1608.8px;top:289.6px;" width="8" height="5" viewBox="0 0 8 5"><path d="M0.2 0.4 H7.8 L4 4.4 Z" fill="#222"/></svg><svg style="left:1639.4px;top:283px;" width="16" height="18" viewBox="0 0 16 18"><path d="M2.5 5.6 L3.5 15.6 Q3.6 16.8 4.8 16.8 H11.2 Q12.4 16.8 12.5 15.6 L13.5 5.6" fill="none" stroke="#3a3a3a" stroke-width="1.25"/><path d="M0.9 4.5 H15.1" stroke="#3a3a3a" stroke-width="1.7" stroke-linecap="round"/><path d="M4.9 4.2 C4.9 0.6 11.1 0.6 11.1 4.2 Z" fill="#3a3a3a"/><path d="M5.7 7.8V14.4M8 7.8V14.4M10.3 7.8V14.4" stroke="#3a3a3a" stroke-width=".95"/></svg><div class="a" style="left:984px;top:338px;width:142px;height:27.8px;background:#1976d2;border-radius:5px"></div><svg style="left:996.6px;top:343.8px;" width="16" height="16" viewBox="0 0 16 16"><circle cx="8" cy="8" r="7.2" fill="none" stroke="#fff" stroke-width="1.4"/><path d="M4.1 8 H11.9 M8 4.1 V11.9" stroke="#fff" stroke-width="1.8"/></svg><span class="t" style="left:1023.00px;top:345.63px;font-size:13.2px;color:#fff;font-weight:700;letter-spacing:-0.268px;">Add parameter</span><span class="t" style="left:984.00px;top:385.35px;font-size:14px;color:#4f4f4f;font-weight:700;letter-spacing:-0.303px;-webkit-text-stroke:.3px #f2f2f2;">Loop condition:</span><div class="a" style="left:1098.4px;top:383.6px;width:17.2px;height:17.2px;border-radius:50%;border:1.9px solid #1976d2;background:#f4f4f4"></div><div class="a" style="left:1102.6px;top:387.8px;width:8.8px;height:8.8px;border-radius:50%;background:#1976d2"></div><span class="t" style="left:1125.40px;top:385.35px;font-size:14px;color:#4f4f4f;font-weight:700;letter-spacing:-0.596px;-webkit-text-stroke:.3px #f2f2f2;">ECMASCRIPT</span><div class="a" style="left:1230.2px;top:383.7px;width:17px;height:17px;border-radius:50%;border:1.7px solid #7a7a7a;background:#f6f6f6"></div><span class="t" style="left:1256.60px;top:385.35px;font-size:14px;color:#4f4f4f;font-weight:700;letter-spacing:0.067px;-webkit-text-stroke:.3px #f2f2f2;">Value-Param</span><div class="a" style="left:984px;top:422px;width:340.8px;height:43px;background:#fff;border:1px solid #b9b9b9;border-radius:4px;box-shadow:0 1px 1.5px rgba(0,0,0,.10)"></div><div class="a" style="left:992px;top:421px;width:93.9px;height:3px;background:#f2f2f2"></div><span class="t" style="left:996.00px;top:415.03px;font-size:13.2px;color:#505050;font-weight:400;letter-spacing:-0.220px;">Sample scripts</span><svg style="left:1301.9px;top:439.6px;" width="8" height="5" viewBox="0 0 8 5"><path d="M0.2 0.4 H7.8 L4 4.4 Z" fill="#222"/></svg><div class="a" style="left:984px;top:477px;width:694.7px;height:164px;background:#fff;border:1px solid #b9b9b9;border-radius:4px;box-shadow:0 1px 1.5px rgba(0,0,0,.10)"></div><div class="a" style="left:992px;top:477px;width:35px;height:3px;background:#f2f2f2"></div><span class="t" style="left:996.00px;top:469.63px;font-size:13.2px;color:#505050;font-weight:400;letter-spacing:-0.133px;">Code</span><div class="a" style="left:1608.5px;top:477px;width:67px;height:3px;background:#f2f2f2"></div><span class="t" style="left:1610.80px;top:473.10px;font-size:9.8px;color:#444;font-weight:400;letter-spacing:-0.263px;">ECMASCRIPT</span><span class="t" style="left:992.60px;top:494.40px;font-size:12px;color:#111;font-weight:400;font-family:'Liberation Mono', monospace;"><span style="color:#1f3f76">1</span></span><span class="t" style="left:992.60px;top:512.40px;font-size:12px;color:#111;font-weight:400;font-family:'Liberation Mono', monospace;"><span style="color:#1f3f76">2</span></span><span class="t" style="left:992.60px;top:530.40px;font-size:12px;color:#111;font-weight:400;font-family:'Liberation Mono', monospace;"><span style="color:#1f3f76">3</span></span><span class="t" style="left:1009.40px;top:494.40px;font-size:12px;color:#111;font-weight:400;font-family:'Liberation Mono', monospace;"><span style="color:#1d3b8f">(</span><span style="color:#0b2a8c">function</span> <span style="color:#2e8b3a">()</span> <span style="color:#2e8b3a">{</span></span><div class="a" style="left:1008.8px;top:509px;width:1px;height:18px;background:#c9c9c9"></div><span class="t" style="left:1009.40px;top:512.40px;font-size:12px;color:#111;font-weight:400;font-family:'Liberation Mono', monospace;">  <span style="color:#0b2a8c">return</span> <span style="color:#0b2a8c">true</span>;</span><span class="t" style="left:1009.40px;top:530.40px;font-size:12px;color:#111;font-weight:400;font-family:'Liberation Mono', monospace;"><span style="color:#2e8b3a">}</span><span style="color:#1d3b8f">)()</span>;</span><svg style="left:1624px;top:616.2px;" width="18" height="18" viewBox="0 0 18 18"><path d="M1.3 4.8 V3.6 Q1.3 1.3 3.6 1.3 H4.6 M13 1.3 H14 Q16.3 1.3 16.3 3.6 V4.8 M16.3 13 V14 Q16.3 16.3 14 16.3 H13 M4.6 16.3 H3.6 Q1.3 16.3 1.3 14 V13" fill="none" stroke="#3c3c3c" stroke-width="1.2" stroke-linecap="round"/><rect x="4.3" y="5.2" width="9.4" height="7.2" rx="1.2" fill="none" stroke="#3c3c3c" stroke-width="1.2"/></svg><svg style="left:1653.7px;top:616.2px;" width="18" height="18" viewBox="0 0 18 18"><rect x="6.3" y="4.3" width="9.9" height="11.8" rx=".8" fill="none" stroke="#3c3c3c" stroke-width="1.2"/><path d="M3.6 1.3 H10.2 Q11 1.3 11 2.1 V12.4 Q11 13.2 10.2 13.2 H2.1 Q1.3 13.2 1.3 12.4 V3.6 Z" fill="#fff" stroke="#3c3c3c" stroke-width="1.2" stroke-linejoin="round"/><path d="M1.6 3.6 H3.6 V1.6 Z" fill="#3c3c3c"/></svg><div class="a" style="left:984px;top:653px;width:458.6px;height:41px;background:#fff;border:1px solid #b9b9b9;border-radius:4px;box-shadow:0 1px 1.5px rgba(0,0,0,.10)"></div><div class="a" style="left:992px;top:652px;width:301.0px;height:3px;background:#f2f2f2"></div><span class="t" style="left:996.00px;top:646.03px;font-size:13.2px;color:#505050;font-weight:400;letter-spacing:-0.183px;">No. of iterations to keep (if enabled, min value is 2):</span><span class="t" style="left:991.80px;top:669.50px;font-size:15px;color:#111;font-weight:400;">5</span><div class="a" style="left:1489.2px;top:666px;width:15px;height:15px;border:2px solid #878787;border-radius:2.5px;background:#f3f3f3"></div><span class="t" style="left:1515.00px;top:666.75px;font-size:14px;color:#4f4f4f;font-weight:700;letter-spacing:-0.142px;-webkit-text-stroke:.3px #f2f2f2;">No Limits</span>
</body></html>
